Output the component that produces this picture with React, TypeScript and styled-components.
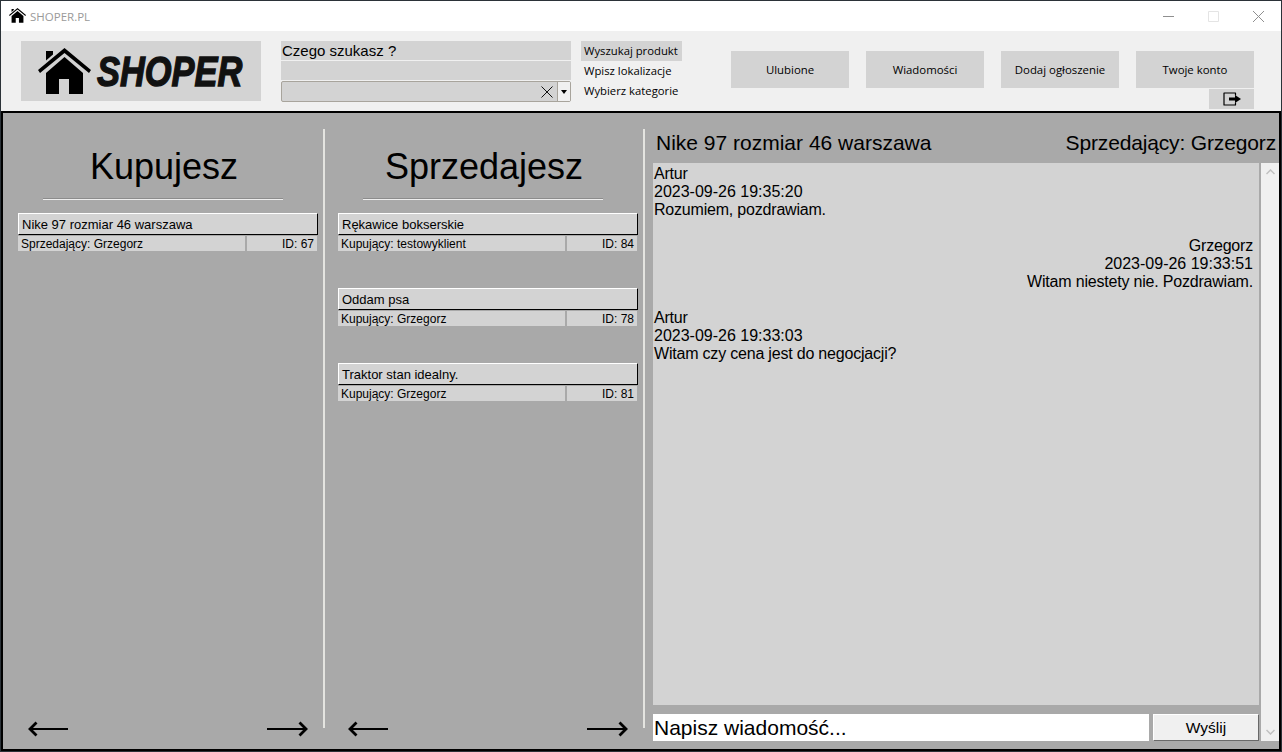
import { createGlobalStyle } from "styled-components";
import styled from "styled-components";

const GlobalStyle = createGlobalStyle`
  html, body {
    margin: 0;
    padding: 0;
    background: #2b3238;
  }
  * {
    box-sizing: border-box;
  }
`;

const Window = styled.div`
  width: 1282px;
  height: 752px;
  padding: 1px;
  display: flex;
  flex-direction: column;
  overflow: hidden;
  font-family: "Liberation Sans", Arial, sans-serif;
  color: #000;
`;

const TitleBar = styled.div`
  height: 30px;
  background: #fff;
  display: flex;
  align-items: center;
  padding-left: 8px;
  flex-shrink: 0;
`;

const AppName = styled.span`
  font-family: "Open Sans", sans-serif;
  font-size: 11.5px;
  color: #9a9a9a;
  margin-left: 4px;
`;

const WinControls = styled.div`
  margin-left: auto;
  display: flex;
  align-items: center;
  gap: 34px;
  padding-right: 17px;
`;

const Header = styled.div`
  height: 80px;
  background: #f0f0f0;
  flex-shrink: 0;
  display: flex;
  padding: 10px 0 0 20px;
`;

const LogoBox = styled.div`
  width: 240px;
  height: 60px;
  background: #d3d3d3;
  display: flex;
  align-items: center;
  padding-left: 17px;
  overflow: hidden;
`;

const LogoText = styled.span`
  font-family: "Liberation Sans", sans-serif;
  font-weight: 700;
  font-style: italic;
  font-size: 43px;
  white-space: nowrap;
  -webkit-text-stroke: 1.4px #111;
  color: #111;
  margin-left: 6px;
  transform: scaleX(0.8);
  transform-origin: left center;
`;

const SearchBox = styled.div`
  width: 290px;
  margin-left: 20px;
  display: flex;
  flex-direction: column;
  gap: 1px;
`;

const SearchField = styled.div`
  height: 19px;
  background: #d3d3d3;
  font-size: 15px;
  line-height: 20px;
  padding-left: 1px;
`;

const Combo = styled.div`
  height: 21px;
  background: #d3d3d3;
  border: 1px solid #a8a49c;
  border-radius: 2px;
  display: flex;
  align-items: center;
  justify-content: flex-end;
`;

const ComboClear = styled.div`
  width: 20px;
  height: 19px;
  display: flex;
  align-items: center;
  justify-content: center;
`;

const ComboArrow = styled.div`
  width: 13px;
  height: 19px;
  background: #f0f0f0;
  border-left: 1px solid #a8a49c;
  display: flex;
  align-items: center;
  justify-content: center;
  &::after {
    content: "";
    border-left: 3.5px solid transparent;
    border-right: 3.5px solid transparent;
    border-top: 4px solid #000;
  }
`;

const ModeList = styled.div`
  width: 101px;
  margin-left: 10px;
  display: flex;
  flex-direction: column;
`;

const ModeItem = styled.div<{ $active?: boolean }>`
  height: 20px;
  line-height: 20px;
  padding-left: 3px;
  font-family: "Open Sans", sans-serif;
  font-size: 11.3px;
  white-space: nowrap;
  background: ${(p) => (p.$active ? "#d3d3d3" : "transparent")};
`;

const NavArea = styled.div`
  margin-left: 49px;
  padding-top: 10px;
  width: 523px;
  display: flex;
  flex-direction: column;
  align-items: flex-end;
`;

const NavRow = styled.div`
  display: flex;
  gap: 17px;
`;

const NavButton = styled.div`
  width: 118px;
  height: 37px;
  background: #d3d3d3;
  display: flex;
  align-items: center;
  justify-content: center;
  font-family: "Open Sans", sans-serif;
  font-size: 11.4px;
`;

const LogoutButton = styled.div`
  width: 45px;
  height: 20px;
  margin-top: 1px;
  background: #d3d3d3;
  display: flex;
  align-items: center;
  justify-content: center;
`;

const Body = styled.div`
  flex: 1;
  min-height: 0;
  background: #a9a9a9;
  border: 2px solid #000;
  display: flex;
`;

const Column = styled.div<{ $width: number; $pad: number }>`
  width: ${(p) => p.$width}px;
  padding: 34px 0 12px ${(p) => p.$pad}px;
  display: flex;
  flex-direction: column;
  flex-shrink: 0;
`;

const ColumnTitle = styled.h1`
  margin: 0 0 12px 25px;
  padding-left: 2px;
  width: 240px;
  font-size: 36px;
  line-height: 40px;
  font-weight: 400;
  text-align: center;
  white-space: nowrap;
`;

const Rule = styled.div`
  margin-left: 25px;
  width: 240px;
  height: 1px;
  background: #eee;
  box-shadow: 0 -1px 0 #8c8c8c;
  margin-bottom: 13px;
`;

const ItemList = styled.div`
  display: flex;
  flex-direction: column;
  gap: 37px;
`;

const Item = styled.div`
  width: 300px;
`;

const ItemTitle = styled.div`
  height: 22px;
  background: #d3d3d3;
  border-top: 1px solid #fff;
  border-left: 1px solid #fff;
  border-bottom: 1px solid #000;
  border-right: 1px solid #000;
  font-size: 13px;
  line-height: 21px;
  padding-left: 3px;
`;

const ItemMeta = styled.div`
  display: flex;
  gap: 2px;
  width: 299px;
  margin-top: 1px;
  height: 15px;
  font-size: 12px;
  line-height: 16px;
`;

const MetaLeft = styled.div`
  width: 227px;
  background: #d3d3d3;
  padding-left: 3px;
`;

const MetaRight = styled.div`
  flex: 1;
  background: #d3d3d3;
  text-align: right;
  padding-right: 3px;
`;

const Pager = styled.div`
  margin-top: auto;
  width: 280px;
  margin-left: 10px;
  display: flex;
  justify-content: space-between;
`;

const Divider = styled.div`
  width: 2px;
  margin: 16px 0 21px;
  background: #e4e4e0;
  flex-shrink: 0;
`;

const ChatColumn = styled.div`
  flex: 1;
  display: flex;
  flex-direction: column;
  min-width: 0;
`;

const ChatHead = styled.div`
  height: 50px;
  display: flex;
  justify-content: space-between;
  align-items: center;
  padding: 9px 3px 0 11px;
  font-size: 21px;
  flex-shrink: 0;
`;

const ChatSeller = styled.span`
  letter-spacing: -0.15px;
`;

const ChatMain = styled.div`
  flex: 1;
  display: flex;
  min-height: 0;
  padding-bottom: 8px;
`;

const ChatLeft = styled.div`
  width: 606px;
  margin-left: 8px;
  display: flex;
  flex-direction: column;
`;

const Messages = styled.div`
  height: 542px;
  background: #d3d3d3;
  padding-top: 2px;
  display: flex;
  flex-direction: column;
  gap: 18px;
  font-size: 16px;
  line-height: 18px;
`;

const Message = styled.div<{ $own?: boolean }>`
  text-align: ${(p) => (p.$own ? "right" : "left")};
  padding: 0 6px 0 1px;
`;

const MessageWords = styled.div`
  letter-spacing: -0.2px;
`;

const Composer = styled.div`
  margin-top: 9px;
  height: 27px;
  display: flex;
  gap: 4px;
`;

const ComposeInput = styled.div`
  width: 496px;
  background: #fff;
  font-size: 21px;
  line-height: 27px;
  padding-left: 1px;
`;

const SendButton = styled.div`
  flex: 1;
  background: #f0f0f0;
  border-top: 1px solid #fff;
  border-left: 1px solid #fff;
  border-bottom: 1px solid #696969;
  border-right: 1px solid #696969;
  display: flex;
  align-items: center;
  justify-content: center;
  font-size: 15.5px;
`;

const ScrollBar = styled.div`
  width: 18px;
  margin-left: 2px;
  background: #f0f0f0;
  display: flex;
  flex-direction: column;
  justify-content: space-between;
  align-items: center;
  padding: 6px 0;
`;

function HouseIcon({ size }: { size: number }) {
  return (
    <svg width={size} height={(size * 47) / 53} viewBox="0 0 53 47" fill="#000" style={{ flexShrink: 0 }}>
      <path d="M8 3h7v3.500l-7 6z" />
      <path d="M26.500 0 53 22l-2 3L26.500 5 2 25l-2-3z" />
      <path d="M26.500 9 45 25v21H31V31H21v15H8V25z" />
    </svg>
  );
}

function LongArrow({ right }: { right?: boolean }) {
  return (
    <svg width="41" height="16" viewBox="0 0 41 16" fill="none" stroke="#000">
      {right ? (
        <>
          <path d="M0 8h39" strokeWidth="2.200" />
          <path d="M32.500 1.500 39 8l-6.500 6.500" strokeWidth="2.800" />
        </>
      ) : (
        <>
          <path d="M40 8H2" strokeWidth="2.200" />
          <path d="M8.500 1.500 2 8l6.500 6.500" strokeWidth="2.800" />
        </>
      )}
    </svg>
  );
}

function Pagination() {
  return (
    <Pager>
      <LongArrow />
      <LongArrow right />
    </Pager>
  );
}

const buying = [{ title: "Nike 97 rozmiar 46 warszawa", who: "Sprzedający: Grzegorz", id: 67 }];

const selling = [
  { title: "Rękawice bokserskie", who: "Kupujący: testowyklient", id: 84 },
  { title: "Oddam psa", who: "Kupujący: Grzegorz", id: 78 },
  { title: "Traktor stan idealny.", who: "Kupujący: Grzegorz", id: 81 },
];

const messages = [
  { author: "Artur", date: "2023-09-26 19:35:20", text: "Rozumiem, pozdrawiam." },
  { author: "Grzegorz", date: "2023-09-26 19:33:51", text: "Witam niestety nie. Pozdrawiam.", own: true },
  { author: "Artur", date: "2023-09-26 19:33:03", text: "Witam czy cena jest do negocjacji?" },
];

function Offers({ items }: { items: typeof selling }) {
  return (
    <ItemList>
      {items.map((item) => (
        <Item key={item.id}>
          <ItemTitle>{item.title}</ItemTitle>
          <ItemMeta>
            <MetaLeft>{item.who}</MetaLeft>
            <MetaRight>ID: {item.id}</MetaRight>
          </ItemMeta>
        </Item>
      ))}
    </ItemList>
  );
}

export default function App() {
  return (
    <Window>
      <GlobalStyle />
      <TitleBar>
        <HouseIcon size={17} />
        <AppName>SHOPER.PL</AppName>
        <WinControls>
          <svg width="11" height="11" viewBox="0 0 11 11" stroke="#8f8f8f" fill="none">
            <path d="M0 5.500h11" />
          </svg>
          <svg width="11" height="11" viewBox="0 0 11 11" stroke="#e4e4e4" fill="none">
            <path d="M.5.500h10v10H.5z" />
          </svg>
          <svg width="11" height="11" viewBox="0 0 11 11" stroke="#8f8f8f" fill="none">
            <path d="M0 0l11 11M11 0 0 11" />
          </svg>
        </WinControls>
      </TitleBar>
      <Header>
        <LogoBox>
          <HouseIcon size={53} />
          <LogoText>SHOPER</LogoText>
        </LogoBox>
        <SearchBox>
          <SearchField>Czego szukasz ?</SearchField>
          <SearchField />
          <Combo>
            <ComboClear>
              <svg width="12" height="12" viewBox="0 0 12 12" stroke="#111" fill="none">
                <path d="M.5.500l11 11M11.500.500l-11 11" />
              </svg>
            </ComboClear>
            <ComboArrow />
          </Combo>
        </SearchBox>
        <ModeList>
          <ModeItem $active>Wyszukaj produkt</ModeItem>
          <ModeItem>Wpisz lokalizacje</ModeItem>
          <ModeItem>Wybierz kategorie</ModeItem>
        </ModeList>
        <NavArea>
          <NavRow>
            <NavButton>Ulubione</NavButton>
            <NavButton>Wiadomości</NavButton>
            <NavButton>Dodaj ogłoszenie</NavButton>
            <NavButton>Twoje konto</NavButton>
          </NavRow>
          <LogoutButton>
            <svg width="18" height="14" viewBox="0 0 18 14" fill="none" stroke="#000">
              <path d="M12.500 3.500V1H1v12h11.500v-2.500" strokeWidth="1.200" strokeLinejoin="round" />
              <path d="M6 5.500h6V3l6 4-6 4V8.500H6z" fill="#000" stroke="none" />
            </svg>
          </LogoutButton>
        </NavArea>
      </Header>
      <Body>
        <Column $width={320} $pad={15}>
          <ColumnTitle>Kupujesz</ColumnTitle>
          <Rule />
          <Offers items={buying} />
          <Pagination />
        </Column>
        <Divider />
        <Column $width={318} $pad={13}>
          <ColumnTitle>Sprzedajesz</ColumnTitle>
          <Rule />
          <Offers items={selling} />
          <Pagination />
        </Column>
        <Divider />
        <ChatColumn>
          <ChatHead>
            <span>Nike 97 rozmiar 46 warszawa</span>
            <ChatSeller>Sprzedający: Grzegorz</ChatSeller>
          </ChatHead>
          <ChatMain>
            <ChatLeft>
              <Messages>
                {messages.map((m) => (
                  <Message key={m.date} $own={m.own}>
                    <MessageWords>{m.author}</MessageWords>
                    <div>{m.date}</div>
                    <MessageWords>{m.text}</MessageWords>
                  </Message>
                ))}
              </Messages>
              <Composer>
                <ComposeInput>Napisz wiadomość...</ComposeInput>
                <SendButton>Wyślij</SendButton>
              </Composer>
            </ChatLeft>
            <ScrollBar>
              <svg width="9" height="6" viewBox="0 0 9 6" fill="none" stroke="#c0c0c0" strokeWidth="1.500">
                <path d="M.5 5 4.500 1l4 4" />
              </svg>
              <svg width="9" height="6" viewBox="0 0 9 6" fill="none" stroke="#c0c0c0" strokeWidth="1.500">
                <path d="M.5 1l4 4 4-4" />
              </svg>
            </ScrollBar>
          </ChatMain>
        </ChatColumn>
      </Body>
    </Window>
  );
}
